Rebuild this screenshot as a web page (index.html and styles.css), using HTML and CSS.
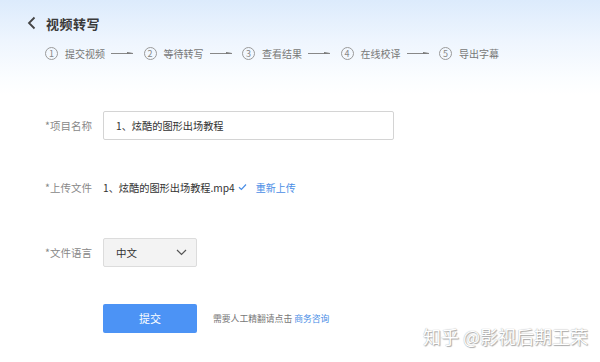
FILE: index.html
```html
<!DOCTYPE html>
<html lang="zh">
<head>
  <meta charset="UTF-8" />
  <title>视频转写</title>
  <link rel="stylesheet" href="styles.css">
</head>
<body>
  <div class="header">
    <div class="title-row">
      <svg class="back" width="10" height="14" viewBox="0 0 10 14"><path d="M7.5 1.5 L2 7 L7.5 12.5" fill="none" stroke="#444" stroke-width="1.8"/></svg>
      <h1>视频转写</h1>
    </div>
    <div class="steps">
      <div class="step"><span class="num">1</span>提交视频<span class="arrow"></span></div>
      <div class="step"><span class="num">2</span>等待转写<span class="arrow"></span></div>
      <div class="step"><span class="num">3</span>查看结果<span class="arrow"></span></div>
      <div class="step"><span class="num">4</span>在线校译<span class="arrow"></span></div>
      <div class="step"><span class="num">5</span>导出字幕</div>
    </div>
  </div>

  <div class="form">
    <div class="row row-name">
      <label>*项目名称</label>
      <div class="input">1、炫酷的图形出场教程</div>
    </div>
    <div class="row row-file">
      <label>*上传文件</label>
      <span class="file">1、炫酷的图形出场教程.mp4</span>
      <svg class="check" width="9" height="8" viewBox="0 0 9 8"><path d="M1 4.2 L3.4 6.5 L8 1.5" fill="none" stroke="#4a8ee6" stroke-width="1.2"/></svg>
      <a class="link">重新上传</a>
    </div>
    <div class="row row-lang">
      <label>*文件语言</label>
      <div class="select">
        <span>中文</span>
        <svg width="11" height="7" viewBox="0 0 11 7"><path d="M1 1 L5.5 5.5 L10 1" fill="none" stroke="#555" stroke-width="1.2"/></svg>
      </div>
    </div>
    <div class="row row-submit">
      <label></label>
      <button class="submit">提交</button>
      <span class="hint">需要人工精翻请点击 <a class="link">商务咨询</a></span>
    </div>
  </div>

  <div class="watermark">知乎 @影视后期王荣</div>
</body>
</html>
```

FILE: styles.css
```css
body {
  margin: 0;
  width: 600px;
  height: 362px;
  overflow: hidden;
  font-family: "Noto Sans CJK SC", "Noto Sans", sans-serif;
  color: #333;
  background: linear-gradient(to bottom, #dcebfc 0px, #eef5fe 40px, #fbfdff 78px, #fff 95px);
  position: relative;
}

.header {
  padding: 13px 0 0 27px;
}

.title-row {
  display: flex;
  align-items: center;
  height: 20px;
}

.back {
  margin-right: 9px;
}

h1 {
  margin: 0;
  font-size: 13px;
  font-weight: bold;
  color: #3a3a3a;
  letter-spacing: 0.5px;
}

.steps {
  display: flex;
  margin: 12px 0 0 18px;
  height: 16px;
  align-items: center;
}

.step {
  display: flex;
  align-items: center;
  width: 98.5px;
  font-size: 10px;
  color: #777;
  flex-shrink: 0;
}

.num {
  width: 11px;
  height: 11px;
  border: 1px solid #9a9a9a;
  border-radius: 50%;
  font-size: 9px;
  line-height: 11px;
  text-align: center;
  color: #888;
  margin-right: 7px;
}

.arrow {
  width: 22px;
  height: 1px;
  background: #888;
  margin-left: 6px;
  position: relative;
}

.arrow::after {
  content: "";
  position: absolute;
  right: 0;
  top: -1px;
  border-left: 6px solid #777;
  border-top: 1px solid transparent;
  border-bottom: 1px solid transparent;
}

.form {
  margin-top: 49px;
}

.row {
  display: flex;
  align-items: center;
}

.row label {
  width: 92px;
  text-align: right;
  padding-right: 11px;
  font-size: 10.5px;
  color: #888;
  flex-shrink: 0;
}

.row-name {
  height: 30px;
}

.input {
  width: 277px;
  height: 27px;
  border: 1px solid #d4d4d4;
  border-radius: 2px;
  padding-left: 12px;
  font-size: 10.2px;
  line-height: 27px;
  color: #333;
  background: #fff;
}

.row-file {
  margin-top: 35px;
  height: 24px;
}

.file {
  font-size: 10.2px;
  color: #333;
}

.check {
  margin: 0 9px 0 3px;
}

.link {
  color: #4a8ee6;
  font-size: 10px;
}

.row-lang {
  margin-top: 38px;
  height: 30px;
}

.select {
  box-sizing: border-box;
  width: 94px;
  height: 29px;
  border: 1px solid #dcdcdc;
  border-radius: 2px;
  background: #f3f3f3;
  display: flex;
  align-items: center;
  justify-content: space-between;
  padding: 0 9px 0 12px;
  font-size: 10.5px;
  color: #333;
}

.row-submit {
  margin-top: 36px;
  height: 30px;
}

.submit {
  width: 94px;
  height: 29px;
  border: none;
  border-radius: 2px;
  background: #4c93f5;
  color: #fff;
  font-family: inherit;
  font-size: 11px;
  margin-right: 16px;
}

.hint {
  font-size: 8.8px;
  color: #777;
}

.hint .link {
  font-size: 8.8px;
}

.watermark {
  position: absolute;
  left: 423px;
  top: 323px;
  font-size: 18px;
  white-space: nowrap;
  color: #fff;
  text-shadow: 0 0 1px #999, 1px 1px 1px #aaa;
}
```
